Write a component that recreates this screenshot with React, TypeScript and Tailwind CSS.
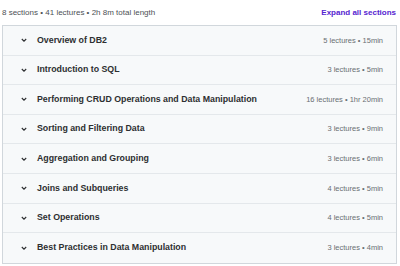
import React from "react";

const sections = [
  ["Overview of DB2", "5 lectures • 15min"],
  ["Introduction to SQL", "3 lectures • 5min"],
  ["Performing CRUD Operations and Data Manipulation", "16 lectures • 1hr 20min"],
  ["Sorting and Filtering Data", "3 lectures • 9min"],
  ["Aggregation and Grouping", "3 lectures • 6min"],
  ["Joins and Subqueries", "4 lectures • 5min"],
  ["Set Operations", "4 lectures • 5min"],
  ["Best Practices in Data Manipulation", "3 lectures • 4min"],
];

function Chevron() {
  return (
    <svg width="8" height="8" viewBox="0 0 8 8" className="shrink-0">
      <path d="M1.8 3 L4 5.2 L6.2 3" fill="none" stroke="#2d2f31" strokeWidth="1.1" />
    </svg>
  );
}

export default function App() {
  return (
    <div className="w-[400px] h-[266px] bg-white overflow-hidden" style={{ fontFamily: "'Liberation Sans', Arial, sans-serif" }}>
      <div className="flex items-center justify-between pl-[2px] pr-[4px] h-[25px]">
        <span className="text-[8px] text-[#4d5155]">8 sections • 41 lectures • 2h 8m total length</span>
        <span className="text-[8px] font-bold text-[#5624d0]">Expand all sections</span>
      </div>
      <div className="mx-[2px] w-[395px] border border-[#d1d7dc]">
        {sections.map(([t, m], i) => (
          <div
            key={i}
            className={"flex items-center h-[29.6px] bg-[#f7f9fa] pl-[17px] pr-[13px] " + (i < sections.length - 1 ? "border-b border-[#e4e8eb]" : "")}
          >
            <Chevron />
            <span className="ml-[9px] text-[8.8px] font-bold text-[#2d2f31] flex-1">{t}</span>
            <span className="text-[7.5px] text-[#6a6f73]">{m}</span>
          </div>
        ))}
      </div>
    </div>
  );
}
